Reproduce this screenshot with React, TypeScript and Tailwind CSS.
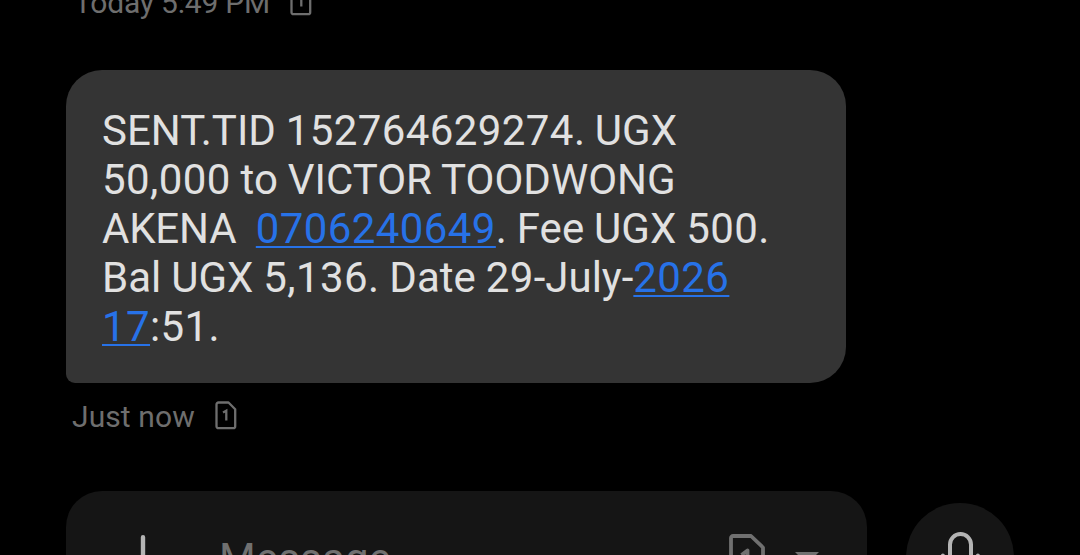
// src/App.tsx
import type { ReactNode } from "react";

type Props = {
  label: string;
};

function SimIcon() {
  return (
    <svg
      width="22"
      height="29"
      viewBox="0 0 22 29"
      fill="none"
      stroke="currentColor"
      strokeWidth="2.3"
      strokeLinejoin="round"
    >
      <path d="M3.500 1.500h10l6.700 6.700v17a2 2 0 0 1-2 2H3.500a2 2 0 0 1-2-2V3.500a2 2 0 0 1 2-2Z" />
      <path d="M8 11.500l3.300-1.800v9.700" strokeLinejoin="miter" />
    </svg>
  );
}

function Caption({ label }: Props) {
  return (
    <div className="flex h-[35px] items-center gap-[20px] text-[30px] leading-[35px] text-[#6e6e6e]">
      <span className="whitespace-nowrap">{label}</span>
      <div className="-mt-[3px]">
        <SimIcon />
      </div>
    </div>
  );
}

// digits are set a little wider than the letters
function Num({ children }: { children: ReactNode }) {
  return <span className="tracking-[0.4px]">{children}</span>;
}

function Link({ children }: { children: ReactNode }) {
  return (
    <a className="tracking-[0.4px] text-[#2772e8] underline decoration-2 underline-offset-[3px] [text-decoration-skip-ink:none]">
      {children}
    </a>
  );
}

export default function App() {
  return (
    <div className="h-[555px] w-[1080px] overflow-hidden bg-black font-['Roboto',sans-serif]">
      <div className="-mt-[15px] pl-[74px] tracking-[-0.2px]">
        <Caption label="Today 5:49 PM" />
      </div>

      <div className="mt-[50px] ml-[66px] h-[313px] w-[780px] rounded-[36px] rounded-bl-[9px] bg-[#343434] pt-[36px] pl-[36px] text-[42px] leading-[49px] whitespace-pre text-[#e1e1e1] [word-spacing:-0.5px]">
        <p>
          SENT.TID <Num>152764629274</Num>. UGX
        </p>
        <p>
          <Num>50,000</Num> to VICTOR TOODWONG
        </p>
        <p>
          <span className="tracking-[-0.2px]">AKENA{"  "}</span>
          <Link>0706240649</Link>. Fee UGX <Num>500.</Num>
        </p>
        <p>
          Bal UGX <Num>5,136.</Num> Date <Num>29</Num>-July-<Link>2026</Link>
        </p>
        <p>
          <Link>17</Link>
          <Num>:51.</Num>
        </p>
      </div>

      <div className="mt-[16px] pl-[72px] tracking-[0.1px]">
        <Caption label="Just now" />
      </div>

      <div className="mt-[57px] ml-[66px] flex gap-[39px]">
        <div className="flex h-[134px] w-[801px] items-center rounded-[36px] bg-[#151515] pl-[51.500px] text-[#707070]">
          <svg
            className="mt-[4px]"
            width="50"
            height="50"
            viewBox="0 0 50 50"
            stroke="#b4b4b4"
            strokeWidth="4.4"
            strokeLinecap="round"
          >
            <path d="M25 2.200v45.600M2.200 25h45.600" />
          </svg>
          <span className="ml-[51.500px] w-[509px] text-[42px] leading-[49px] tracking-[0.15px]">Message</span>
          <svg
            className="-mt-[2px]"
            width="38"
            height="48"
            viewBox="0 0 38 48"
            fill="none"
            stroke="currentColor"
            strokeWidth="3.8"
            strokeLinejoin="round"
          >
            <path d="M5 3h18l12 11.500v27.500a3 3 0 0 1-3 3H6a3 3 0 0 1-3-3V5a2 2 0 0 1 2-2Z" />
            <path d="M13.500 22l6-4.500v16" />
          </svg>
          <svg className="ml-[28px]" width="26" height="14" viewBox="0 0 26 14" fill="currentColor">
            <path d="M1 1h24L13 13Z" />
          </svg>
        </div>

        <div className="mt-[12px] flex h-[108px] w-[108px] items-start justify-center rounded-full bg-[#151515] pt-[29px]">
          <svg
            width="44"
            height="50"
            viewBox="0 0 44 50"
            fill="none"
            stroke="#b4b4b4"
            strokeWidth="4"
            strokeLinecap="round"
          >
            <rect x="12" y="2" width="21" height="32" rx="10.500" />
            <path d="M4.900 23.500v1.500a17.500 17.500 0 0 0 35 0v-1.500M22.400 42.500v5.500" />
          </svg>
        </div>
      </div>
    </div>
  );
}
